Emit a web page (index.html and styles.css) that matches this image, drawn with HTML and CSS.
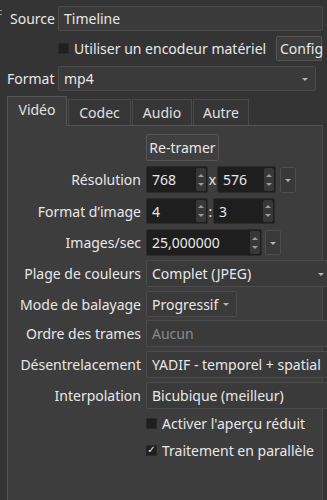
FILE: index.html
```html
<!DOCTYPE html>
<html lang="fr">
<head>
<meta charset="utf-8">
<link rel="stylesheet" href="styles.css">
</head>
<body>
<div class="app">
  <span class="edge-mark"></span>
  <div class="row r-source">
    <span class="lbl">Source</span>
    <div class="field w-source">Timeline</div>
  </div>
  <div class="row r-hw">
    <span class="box"></span>
    <span class="check-text">Utiliser un encodeur matériel</span>
    <div class="btn btn-config">Config</div>
  </div>
  <div class="row r-format">
    <span class="lbl">Format</span>
    <div class="combo w-format">mp4<span class="arrow"></span></div>
  </div>

  <div class="tabs">
    <div class="tab active t1">Vidéo</div>
    <div class="tab t2">Codec</div>
    <div class="tab t3">Audio</div>
    <div class="tab t4">Autre</div>
  </div>

  <div class="panel">
    <div class="form">
      <div class="frow f-retramer">
        <span class="flbl"></span>
        <div class="btn btn-retramer">Re-tramer</div>
      </div>
      <div class="frow f-res">
        <span class="flbl">Résolution</span>
        <div class="spin w-spin">768<span class="spinbtn"><i class="up"></i><i class="down"></i></span></div>
        <span class="sep">x</span>
        <div class="spin w-spin2">576<span class="spinbtn"><i class="up"></i><i class="down"></i></span></div>
        <div class="dd"><span class="arrow"></span></div>
      </div>
      <div class="frow f-aspect">
        <span class="flbl">Format d’image</span>
        <div class="spin w-spin">4<span class="spinbtn"><i class="up"></i><i class="down"></i></span></div>
        <span class="sep sep-colon">:</span>
        <div class="spin w-spin3">3<span class="spinbtn"><i class="up"></i><i class="down"></i></span></div>
      </div>
      <div class="frow f-fps">
        <span class="flbl">Images/sec</span>
        <div class="spin w-fps">25,000000<span class="spinbtn"><i class="up"></i><i class="down"></i></span></div>
        <div class="dd dd-fps"><span class="arrow"></span></div>
      </div>
      <div class="frow f-range">
        <span class="flbl">Plage de couleurs</span>
        <div class="combo w-edge w-range">Complet (JPEG)<span class="arrow"></span></div>
      </div>
      <div class="frow f-scan">
        <span class="flbl">Mode de balayage</span>
        <div class="combo w-scan">Progressif<span class="arrow"></span></div>
      </div>
      <div class="frow f-order">
        <span class="flbl">Ordre des trames</span>
        <div class="combo w-edge disabled">Aucun</div>
      </div>
      <div class="frow f-deint">
        <span class="flbl">Désentrelacement</span>
        <div class="combo w-edge">YADIF - temporel + spatial</div>
      </div>
      <div class="frow f-interp">
        <span class="flbl">Interpolation</span>
        <div class="combo w-edge">Bicubique (meilleur)</div>
      </div>
      <div class="frow crow c1">
        <span class="flbl"></span>
        <span class="box"></span>
        <span class="check-text">Activer l'aperçu réduit</span>
      </div>
      <div class="frow crow c2">
        <span class="flbl"></span>
        <span class="box checked">✓</span>
        <span class="check-text">Traitement en parallèle</span>
      </div>
    </div>
  </div>
</div>
</body>
</html>
```

FILE: styles.css
```css
html, body {
  margin: 0;
  padding: 0;
}
body {
  width: 327px;
  height: 500px;
  overflow: hidden;
  background: #343434;
  color: #e8e8e8;
  font-family: "Noto Sans", "DejaVu Sans", sans-serif;
  font-size: 14px;
}
.app {
  position: relative;
  width: 327px;
  height: 500px;
  padding-top: 6px;
  box-sizing: border-box;
  overflow: hidden;
}
.edge-mark {
  position: absolute;
  left: 0;
  top: 10px;
  width: 2px;
  height: 5px;
  border-top: 1px solid #9a9a9a;
  border-bottom: 1px solid #9a9a9a;
  box-sizing: border-box;
}
.row {
  display: flex;
  align-items: center;
  height: 25px;
  white-space: nowrap;
}
.r-source { padding-left: 10px; }
.r-source .lbl { width: 48px; }
.r-hw { margin-top: 5px; padding-left: 58px; }
.r-format { margin-top: 5px; padding-left: 7px; }
.r-format .lbl { width: 51px; }

.field, .combo {
  position: relative;
  height: 25px;
  box-sizing: border-box;
  display: flex;
  align-items: center;
  padding-left: 5px;
  background: #3a3a3a;
  border: 1px solid #4b4b4b;
  border-radius: 2px;
  white-space: nowrap;
  overflow: hidden;
  flex: none;
}
.w-source { width: 265px; }
.w-format { width: 258px; }

.arrow {
  position: absolute;
  right: 7px;
  top: 50%;
  margin-top: -1px;
  width: 0;
  height: 0;
  border-left: 3px solid transparent;
  border-right: 3px solid transparent;
  border-top: 3px solid #b4b4b4;
}

.box {
  width: 11px;
  height: 11px;
  box-sizing: border-box;
  background: #1f1f1f;
  border: 1px solid #2a2a2a;
  flex: none;
  display: flex;
  align-items: center;
  justify-content: center;
  color: #f0f0f0;
  font-size: 10px;
  line-height: 1;
  font-family: "DejaVu Sans", sans-serif;
  font-weight: bold;
}
.check-text { margin-left: 5px; }

.btn {
  height: 25px;
  box-sizing: border-box;
  display: flex;
  align-items: center;
  justify-content: center;
  background: #3d3d3d;
  border: 1px solid #555;
  border-radius: 2px;
  white-space: nowrap;
  flex: none;
}
.btn-config {
  margin-left: auto;
  margin-right: 5px;
  width: 46px;
  justify-content: flex-start;
  padding-left: 3px;
}

.tabs {
  display: flex;
  align-items: flex-end;
  margin-top: 5px;
  padding-left: 7px;
  height: 29px;
  position: relative;
  z-index: 2;
}
.tab {
  height: 26px;
  box-sizing: border-box;
  display: flex;
  align-items: center;
  justify-content: center;
  background: #363636;
  border: 1px solid #4a4a4a;
  border-bottom: none;
  margin-right: 1px;
  color: #e0e0e0;
  padding-bottom: 1px;
}
.tab.active {
  background: #3d3d3d;
  border-color: #555;
  margin-bottom: -1px;
  height: 30px;
  padding-bottom: 5px;
}
.t1 { width: 60px; }
.t2 { width: 63px; }
.t3 { width: 60px; }
.t4 { width: 56px; }

.panel {
  margin-left: 7px;
  width: 316px;
  height: 400px;
  box-sizing: border-box;
  background: #3d3d3d;
  border: 1px solid #555;
  border-right-color: #4a4a4a;
  position: relative;
  z-index: 1;
}
.form {
  display: flex;
  flex-direction: column;
  padding-top: 8px;
}
.frow {
  display: flex;
  align-items: center;
  height: 27px;
  white-space: nowrap;
}
.flbl {
  width: 133px;
  flex: none;
  text-align: right;
  padding-right: 5px;
}
.btn-retramer {
  width: 73px;
  height: 27px;
  background: #3f3f3f;
}
.f-res { margin-top: 5px; }
.f-aspect { margin-top: 5px; height: 26px; }
.f-fps { margin-top: 5px; }
.f-range { margin-top: 4px; }
.f-scan { margin-top: 4px; height: 26px; }
.f-order { margin-top: 3px; }
.f-deint { margin-top: 4px; }
.f-interp { margin-top: 4px; }
.c1 { margin-top: 4px; height: 20px; }
.c2 { margin-top: 7px; height: 20px; }

.frow .combo { height: 100%; }
.w-edge {
  width: 181px;
  border-right-width: 0;
  border-top-right-radius: 0;
  border-bottom-right-radius: 0;
}
.w-range .arrow { right: 3px; }
.w-scan { width: 91px; }
.disabled { color: #8a8a8a; }

.spin {
  position: relative;
  height: 100%;
  box-sizing: border-box;
  display: flex;
  align-items: center;
  padding-left: 5px;
  background: #1e1e1e;
  border: 1px solid #2b2b2b;
  border-radius: 2px;
  flex: none;
}
.w-spin { width: 62px; }
.w-spin2 { width: 59px; }
.w-spin3 { width: 62px; }
.w-fps { width: 116px; }
.spinbtn {
  position: absolute;
  right: 1px;
  top: 1px;
  bottom: 1px;
  width: 10px;
  background: #383838;
  border-radius: 2px;
  display: flex;
  flex-direction: column;
  align-items: center;
  justify-content: center;
  gap: 6px;
}
.spinbtn i {
  display: block;
  width: 0;
  height: 0;
  border-left: 3px solid transparent;
  border-right: 3px solid transparent;
}
.spinbtn .up { border-bottom: 3px solid #9a9a9a; }
.spinbtn .down { border-top: 3px solid #9a9a9a; }
.sep {
  width: 9px;
  text-align: center;
  flex: none;
}
.sep-colon { width: 5px; }
.dd {
  position: relative;
  margin-left: 4px;
  width: 16px;
  height: 26px;
  box-sizing: border-box;
  background: #393939;
  border: 1px solid #4d4d4d;
  border-radius: 2px;
  flex: none;
}
.dd-fps { margin-left: 3px; height: 25px; }
.dd .arrow { right: 4px; }
.crow .box { margin-left: 0; }
```
